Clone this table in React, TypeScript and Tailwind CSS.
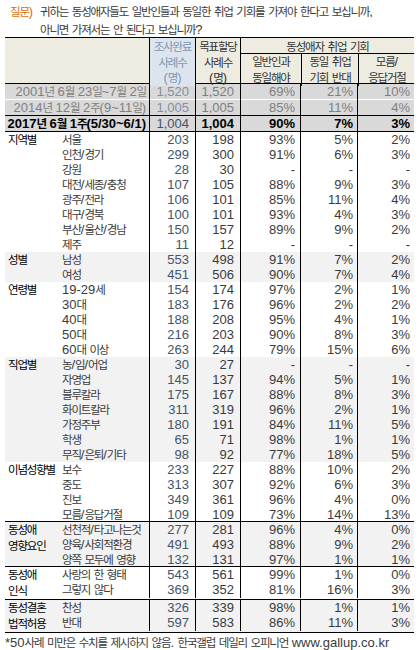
import React from 'react';

type Row = [string, string, string, string, string, string];

interface Group {
  label: string[];
  shaded: boolean;
  ruled: boolean;
  rows: Row[];
}

// 한글 부분만 조금 작게 (원본 글꼴 폭에 맞춤)
const T = ({ s }: { s: string }) => (
  <>
    {s.split(/([가-힣]+)/).map((p, i) =>
      /[가-힣]/.test(p) ? (
        <span key={i} className="text-[11.5px] tracking-[-1.2px]">
          {p}
        </span>
      ) : (
        p
      )
    )}
  </>
);

const groups: Group[] = [
  {
    label: ['지역별'],
    shaded: false,
    ruled: false,
    rows: [
      ['서울', '203', '198', '93%', '5%', '2%'],
      ['인천/경기', '299', '300', '91%', '6%', '3%'],
      ['강원', '28', '30', '-', '-', '-'],
      ['대전/세종/충청', '107', '105', '88%', '9%', '3%'],
      ['광주/전라', '106', '101', '85%', '11%', '4%'],
      ['대구/경북', '100', '101', '93%', '4%', '3%'],
      ['부산/울산/경남', '150', '157', '89%', '9%', '2%'],
      ['제주', '11', '12', '-', '-', '-'],
    ],
  },
  {
    label: ['성별'],
    shaded: true,
    ruled: false,
    rows: [
      ['남성', '553', '498', '91%', '7%', '2%'],
      ['여성', '451', '506', '90%', '7%', '4%'],
    ],
  },
  {
    label: ['연령별'],
    shaded: false,
    ruled: false,
    rows: [
      ['19-29세', '154', '174', '97%', '2%', '1%'],
      ['30대', '183', '176', '96%', '2%', '2%'],
      ['40대', '188', '208', '95%', '4%', '1%'],
      ['50대', '216', '203', '90%', '8%', '3%'],
      ['60대 이상', '263', '244', '79%', '15%', '6%'],
    ],
  },
  {
    label: ['직업별'],
    shaded: true,
    ruled: false,
    rows: [
      ['농/임/어업', '30', '27', '-', '-', '-'],
      ['자영업', '145', '137', '94%', '5%', '1%'],
      ['블루칼라', '175', '167', '88%', '8%', '3%'],
      ['화이트칼라', '311', '319', '96%', '2%', '1%'],
      ['가정주부', '180', '191', '84%', '11%', '5%'],
      ['학생', '65', '71', '98%', '1%', '1%'],
      ['무직/은퇴/기타', '98', '92', '77%', '18%', '5%'],
    ],
  },
  {
    label: ['이념성향별'],
    shaded: false,
    ruled: true,
    rows: [
      ['보수', '233', '227', '88%', '10%', '2%'],
      ['중도', '313', '307', '92%', '6%', '3%'],
      ['진보', '349', '361', '96%', '4%', '0%'],
      ['모름/응답거절', '109', '109', '73%', '14%', '13%'],
    ],
  },
  {
    label: ['동성애', '영향요인'],
    shaded: true,
    ruled: true,
    rows: [
      ['선천적/타고나는것', '277', '281', '96%', '4%', '0%'],
      ['양육/사회적환경', '491', '493', '88%', '9%', '2%'],
      ['양쪽 모두에 영향', '132', '131', '97%', '1%', '1%'],
    ],
  },
  {
    label: ['동성애', '인식'],
    shaded: false,
    ruled: true,
    rows: [
      ['사랑의 한 형태', '543', '561', '99%', '1%', '0%'],
      ['그렇지 않다', '369', '352', '81%', '16%', '3%'],
    ],
  },
  {
    label: ['동성결혼', '법적허용'],
    shaded: true,
    ruled: true,
    rows: [
      ['찬성', '326', '339', '98%', '1%', '1%'],
      ['반대', '597', '583', '86%', '11%', '3%'],
    ],
  },
];

const periods = [
  { row: ['2001년 6월 23일~7월 2일', '1,520', '1,520', '69%', '21%', '10%'], kind: 'old', line: 'border-white' },
  { row: ['2014년 12월 2주(9~11일)', '1,005', '1,005', '85%', '11%', '4%'], kind: 'old', line: 'border-black' },
  { row: ['2017년 6월 1주(5/30~6/1)', '1,004', '1,004', '90%', '7%', '3%'], kind: 'now', line: 'border-black' },
];

const App = () => {
  return (
    <div className="w-[419px] h-[650px] overflow-hidden bg-white px-[5px] font-['Liberation_Sans','Noto_Sans_CJK_KR',sans-serif] text-[13px] text-[#3a3a3a]">
      {/* 질문 */}
      <div className="pt-[3px] pl-[5px] leading-[17px] h-[37px]">
        <div className="flex">
          <span className="w-[30px] text-[#e46c0a]">
            <T s="질문)" />
          </span>
          <span>
            <T s="귀하는 동성애자들도 일반인들과 동일한 취업 기회를 가져야 한다고 보십니까," />
          </span>
        </div>
        <div className="pl-[30px]">
          <T s="아니면 가져서는 안 된다고 보십니까?" />
        </div>
      </div>

      {/* 머리글 */}
      <div className="grid grid-cols-[144px_46px_45px_60px_57px_57px] border-t border-b border-black bg-[#eeece1] leading-[15px] h-[47px] text-center text-[#333]">
        <div />
        <div className="border-l border-black bg-[#dce4ee] text-[#7f96b4] flex flex-col pt-[1px]">
          <span className="h-[16px]"><T s="조사완료" /></span>
          <span className="h-[15px]"><T s="사례수" /></span>
          <span><T s="(명)" /></span>
        </div>
        <div className="border-l border-black flex flex-col pt-[1px]">
          <span className="h-[16px]"><T s="목표할당" /></span>
          <span className="h-[15px]"><T s="사례수" /></span>
          <span><T s="(명)" /></span>
        </div>
        <div className="col-span-3 border-l border-black flex flex-col">
          <div className="h-[16px] pt-[1px] border-b border-black">
            <T s="동성애자 취업 기회" />
          </div>
          <div className="flex-1 grid grid-cols-[60px_57px_57px]">
            <div>
              <T s="일반인과" />
              <br />
              <T s="동일해야" />
            </div>
            <div className="border-l border-black">
              <T s="동일 취업" />
              <br />
              <T s="기회 반대" />
            </div>
            <div className="border-l border-black">
              <T s="모름/" />
              <br />
              <T s="응답거절" />
            </div>
          </div>
        </div>
      </div>

      {/* 조사 시점별 */}
      {periods.map(({ row, kind, line }) => {
        const now = kind === 'now';
        return (
          <div
            key={row[0]}
            className={`grid grid-cols-[144px_46px_45px_60px_57px_57px] h-[16px] leading-[15px] border-b bg-[#d9d9d9] ${line} ${
              now ? 'font-bold text-black' : 'text-[#7f7f7f]'
            }`}
          >
            <div className="text-right pr-[3px] whitespace-nowrap">
              <T s={row[0]} />
            </div>
            <div className={`border-l border-black text-right pr-[6px] font-normal ${now ? 'text-[#44546a]' : 'text-[#8090a6]'}`}>
              {row[1]}
            </div>
            <div className="border-l border-black text-right pr-[6px]">{row[2]}</div>
            <div className="border-l border-black text-right pr-[5px]">{row[3]}</div>
            <div className="border-l border-black text-right pr-[4px]">{row[4]}</div>
            <div className="border-l border-black text-right pr-[4px]">{row[5]}</div>
          </div>
        );
      })}

      {/* 응답자 특성별 */}
      {groups.map((g) => (
        <div
          key={g.label.join('')}
          className={`flex ${g.shaded ? 'bg-[#f2f2f2]' : 'bg-white'} ${g.ruled ? 'border-b border-black' : ''}`}
        >
          <div className="w-[57px] pl-[3px] leading-[15px] text-black whitespace-nowrap">
            {g.label.map((l) => (
              <div key={l}>
                <T s={l} />
              </div>
            ))}
          </div>
          <div className="flex-1">
            {g.rows.map((r, i) => (
              <div
                key={r[0]}
                className={`grid grid-cols-[87px_46px_45px_60px_57px_57px] leading-[15px] ${
                  g.ruled && i === g.rows.length - 1 ? 'h-[14px]' : 'h-[15px]'
                }`}
              >
                <div className="whitespace-nowrap">
                  <T s={r[0]} />
                </div>
                <div className="border-l border-black text-right pr-[6px] text-[#44546a]">{r[1]}</div>
                <div className="border-l border-black text-right pr-[6px]">{r[2]}</div>
                <div className="border-l border-black text-right pr-[5px]">{r[3]}</div>
                <div className="border-l border-black text-right pr-[4px]">{r[4]}</div>
                <div className="border-l border-black text-right pr-[4px]">{r[5]}</div>
              </div>
            ))}
          </div>
        </div>
      ))}

      <div className="pt-[2px] leading-[15px] whitespace-nowrap">
        <T s="*50사례 미만은 수치를 제시하지 않음. 한국갤럽 데일리 오피니언 www.gallup.co.kr" />
      </div>
    </div>
  );
};

export default App;
